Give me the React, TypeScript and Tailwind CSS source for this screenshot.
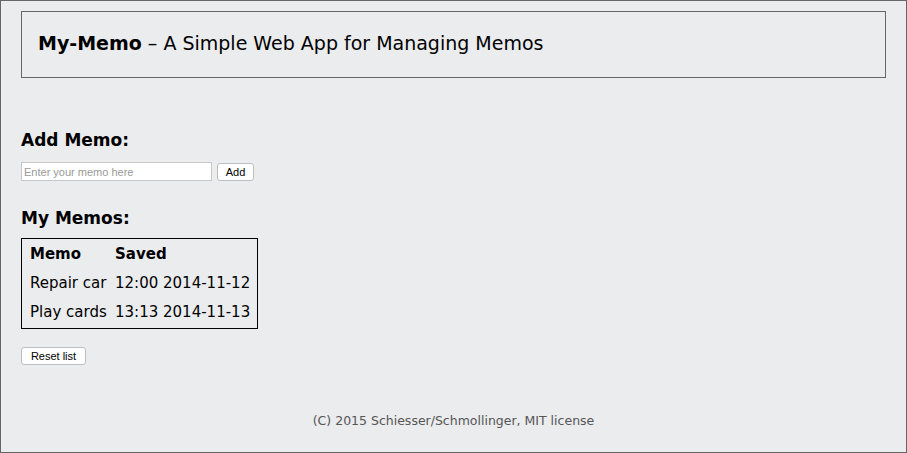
const memos = [
  { text: "Repair car", saved: "12:00 2014-11-12" },
  { text: "Play cards", saved: "13:13 2014-11-13" },
];

export default function App() {
  return (
    <div className="w-[907px] h-[453px] border border-[#666] bg-[#ebecee] px-[20px] pt-[10px] font-['DejaVu_Sans',Verdana,sans-serif] text-black flex flex-col">
      <header className="h-[67px] border border-[#666] flex items-center px-[16px] pb-[3px] text-[19px]">
        <span className="font-bold">My-Memo</span>
        <span>&nbsp;– A Simple Web App for Managing Memos</span>
      </header>

      <h2 className="mt-[51px] text-[17px] leading-[22px] font-bold">Add Memo:</h2>
      <div className="mt-[11px] flex items-start gap-[5px]">
        <input
          type="text"
          placeholder="Enter your memo here"
          className="w-[191px] h-[19px] bg-white border border-[#c8c8c8] px-[2px] text-[11px] font-['Liberation_Sans',Arial,sans-serif] placeholder:text-[#999] outline-none"
        />
        <button className="mt-[1px] w-[37px] h-[18px] bg-white border border-[#bdbdbd] rounded-[3px] text-[11px] leading-[16px] font-['Liberation_Sans',Arial,sans-serif]">
          Add
        </button>
      </div>

      <h2 className="mt-[26px] text-[17px] leading-[22px] font-bold">My Memos:</h2>
      <table className="mt-[9px] w-[237px] table-fixed border border-black border-separate border-spacing-0 text-[15px] p-[1px]">
        <thead>
          <tr className="h-[29px]">
            <th className="text-left font-bold pl-[7px] w-[92px]">Memo</th>
            <th className="text-left font-bold">Saved</th>
          </tr>
        </thead>
        <tbody>
          {memos.map((m) => (
            <tr key={m.text} className="h-[29px]">
              <td className="pl-[7px] whitespace-nowrap">{m.text}</td>
              <td className="whitespace-nowrap">{m.saved}</td>
            </tr>
          ))}
        </tbody>
      </table>

      <div className="mt-[18px] flex">
        <button className="w-[65px] h-[18px] bg-white border border-[#bdbdbd] rounded-[3px] text-[11px] leading-[16px] font-['Liberation_Sans',Arial,sans-serif]">
          Reset list
        </button>
      </div>

      <footer className="mt-[48px] text-center text-[12.5px] leading-[16px] text-[#555]">
        (C) 2015 Schiesser/Schmollinger, MIT license
      </footer>
    </div>
  );
}
